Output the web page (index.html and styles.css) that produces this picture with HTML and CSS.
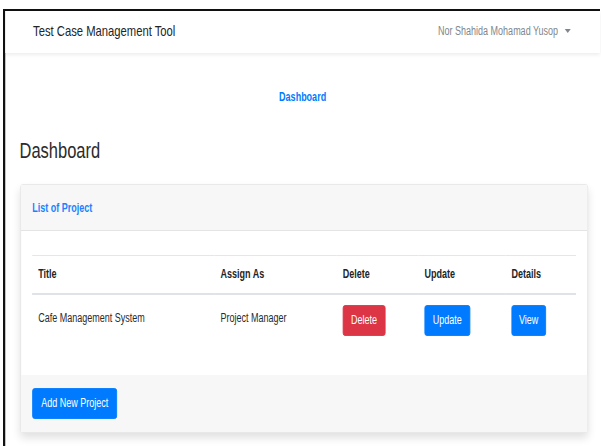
FILE: index.html
```html
<!DOCTYPE html>
<html lang="en">
<head>
<meta charset="utf-8">
<title>Dashboard - Test Case Management Tool</title>
<link rel="stylesheet" href="styles.css">
</head>
<body>
<div class="viewport">
  <div class="page">
    <div class="frame">
      <nav class="navbar">
        <span class="brand">Test Case Management Tool</span>
        <span class="user">Nor Shahida Mohamad Yusop <span class="caret"></span></span>
      </nav>

      <div class="crumbs"><a class="crumb-link" href="#">Dashboard</a></div>

      <main class="container">
        <h1 class="page-title">Dashboard</h1>

        <section class="card">
          <header class="card-header">
            <a class="card-title" href="#">List of Project</a>
          </header>
          <div class="card-body">
            <table class="table">
              <colgroup>
                <col class="c-title"><col class="c-role"><col class="c-del"><col class="c-upd"><col class="c-view">
              </colgroup>
              <thead>
                <tr><th>Title</th><th>Assign As</th><th>Delete</th><th>Update</th><th>Details</th></tr>
              </thead>
              <tbody>
                <tr>
                  <td>Cafe Management System</td>
                  <td>Project Manager</td>
                  <td><button class="btn btn-danger">Delete</button></td>
                  <td><button class="btn btn-primary">Update</button></td>
                  <td><button class="btn btn-primary btn-view">View</button></td>
                </tr>
              </tbody>
            </table>
          </div>
          <footer class="card-footer">
            <button class="btn btn-primary btn-add">Add New Project</button>
          </footer>
        </section>
      </main>
    </div>
  </div>
</div>
</body>
</html>
```

FILE: styles.css
```css
* { box-sizing: border-box; }

html, body {
  margin: 0;
  padding: 0;
  background: #ffffff;
  overflow: hidden;
}

.viewport {
  width: 601px;
  height: 446px;
  overflow: hidden;
  background: #ffffff;
}

/* The whole page is drawn in a condensed horizontal scale */
.page {
  width: 800px;
  height: 446px;
  padding: 9px 0 0 4px;
  transform: scaleX(0.75);
  transform-origin: 0 0;
  font-family: "Liberation Sans", Arial, sans-serif;
  color: #212529;
}

.frame {
  border-top: 2px solid #111;
  border-left: 3px solid #111;
  height: 437px;
  background: #fff;
}

/* top bar */
.navbar {
  height: 42px;
  display: flex;
  align-items: center;
  justify-content: space-between;
  padding: 0 39px 3px 37px;
  background: #fff;
  box-shadow: 0 2px 4px rgba(0, 0, 0, 0.07);
  position: relative;
}

.brand {
  font-size: 15px;
  color: #212529;
}

.user {
  font-size: 12px;
  color: #80868c;
  display: flex;
  align-items: center;
  gap: 9px;
}

.caret {
  width: 0;
  height: 0;
  border-top: 4px solid #80868c;
  border-left: 4px solid transparent;
  border-right: 4px solid transparent;
}

/* breadcrumb link */
.crumbs {
  margin-top: 35px;
  text-align: center;
  line-height: 16px;
}

.crumb-link {
  font-size: 12px;
  font-weight: bold;
  color: #007bff;
  text-decoration: none;
}

.container {
  padding: 0 16px 0 20px;
}

.page-title {
  margin: 33px 0 20px -1px;
  font-size: 22px;
  line-height: 26px;
  font-weight: normal;
  color: #2b2b2b;
}

/* project card */
.card {
  border: 1px solid #e6e6e6;
  border-radius: 3px;
  background: #fff;
  box-shadow: 0 5px 10px rgba(0, 0, 0, 0.12);
}

.card-header {
  height: 46px;
  display: flex;
  align-items: center;
  padding: 0 15px;
  background: #f7f7f7;
  border-bottom: 1px solid #e4e4e4;
}

.card-title {
  font-size: 12px;
  font-weight: bold;
  color: #1a82ff;
  text-decoration: none;
}

.card-body {
  padding: 24px 15px 30px;
}

.table {
  width: 100%;
  border-collapse: collapse;
  table-layout: fixed;
  font-size: 12px;
}

.c-title { width: 243px; }
.c-role { width: 163px; }
.c-del { width: 109px; }
.c-upd { width: 116px; }

.table th {
  text-align: left;
  font-weight: bold;
  height: 38px;
  padding: 0 8px;
  border-top: 1px solid #e3e6ea;
  border-bottom: 2px solid #dfe3e7;
  vertical-align: middle;
}

.table td {
  padding: 10px 8px 9px;
  vertical-align: middle;
  color: #2a2a2a;
}

.table td:nth-child(-n+2) {
  padding-bottom: 14px;
}

.btn {
  font-family: inherit;
  font-size: 12px;
  line-height: 17px;
  padding: 6px 10px;
  border: 1px solid transparent;
  border-radius: 3px;
  color: #fff;
  cursor: pointer;
}

.btn-view { padding: 6px 9px; }
.btn-add { padding: 6px 11px; }

.btn-danger {
  background: #dc3545;
  border-color: #dc3545;
}

.btn-primary {
  background: #007bff;
  border-color: #007bff;
}

.card-footer {
  padding: 13px 15px 13px;
  background: #f7f7f7;
}
```
